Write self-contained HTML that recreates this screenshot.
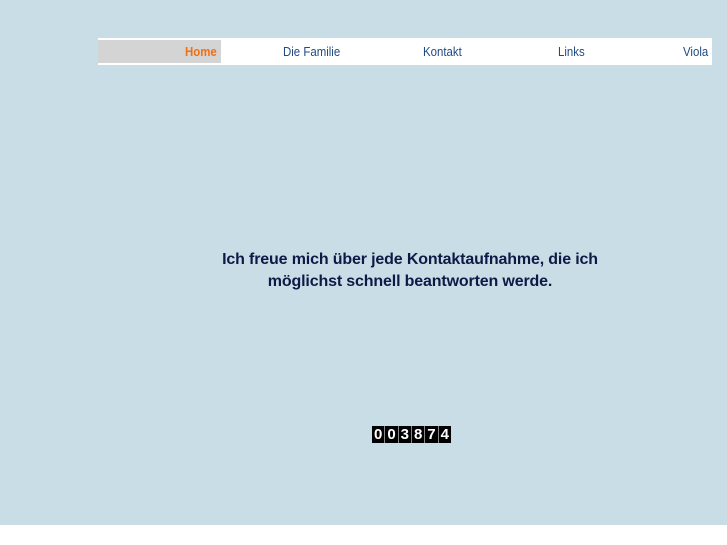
<!DOCTYPE html>
<html><head><meta charset="utf-8"><style>
html,body{margin:0;padding:0;width:727px;height:545px;background:#fff;overflow:hidden;font-family:"Liberation Sans",Arial,sans-serif}
#bg{position:absolute;left:0;top:0;width:727px;height:525px;background:#c9dde6}
#nav{position:absolute;left:98px;top:38px;width:614px;height:27px;background:#fff}
#home{position:absolute;left:0;top:2px;width:123px;height:23px;background:#d4d4d4}
.n{position:absolute;top:6px;font-size:13px;color:#1e4a82;transform:scaleX(0.88);transform-origin:left top;white-space:nowrap}
#txt{position:absolute;left:160px;top:249px;width:500px;text-align:center;font-size:16px;font-weight:bold;color:#0d1a45;line-height:22px;letter-spacing:-0.15px;white-space:nowrap}
#cnt{position:absolute;left:372px;top:426px;width:79px;height:17px;background:#000;display:flex}
#cnt span{flex:1;color:#fff;font-size:15px;font-weight:bold;text-align:center;line-height:17px;border-right:1px solid #888}
</style></head><body>
<div id="bg"></div>
<div id="nav"><div id="home"></div>
<span class="n" style="left:87px;color:#f07010;font-weight:bold">Home</span>
<span class="n" style="left:185px">Die Familie</span>
<span class="n" style="left:325px">Kontakt</span>
<span class="n" style="left:460px">Links</span>
<span class="n" style="left:585px">Viola</span>
</div>
<div id="txt">Ich freue mich über jede Kontaktaufnahme, die ich<br>möglichst schnell beantworten werde.</div>
<div id="cnt"><span>0</span><span>0</span><span>3</span><span>8</span><span>7</span><span style="border:0">4</span></div>
</body></html>
